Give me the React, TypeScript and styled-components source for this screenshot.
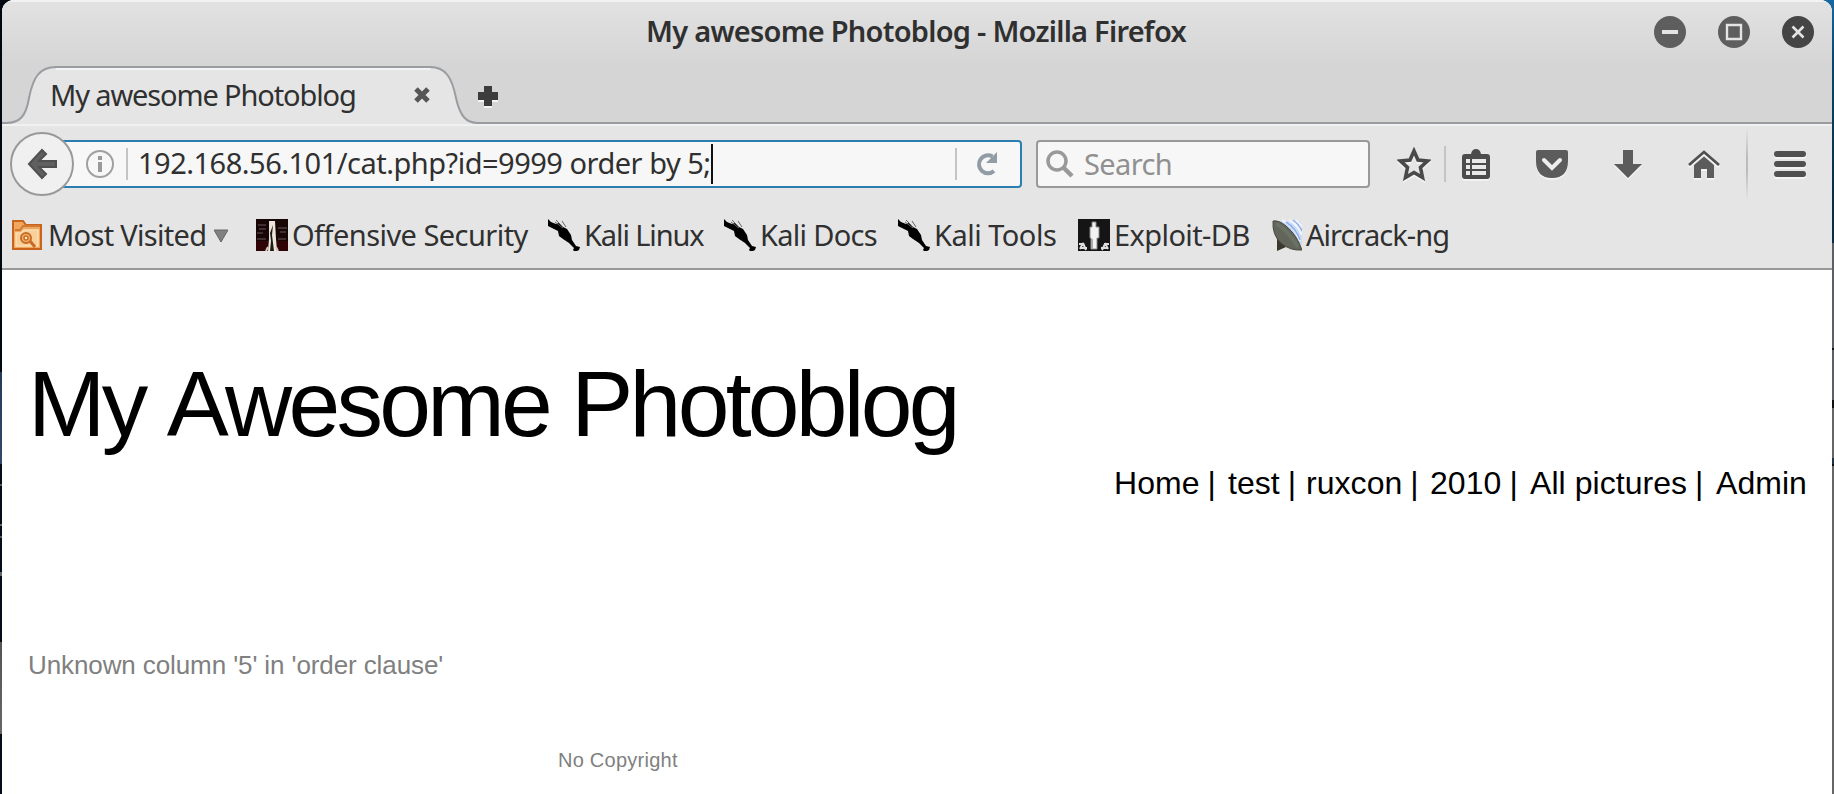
import React from 'react';
import styled, { createGlobalStyle } from 'styled-components';

const Global = createGlobalStyle`
  * { box-sizing: border-box; }
  html, body { margin: 0; padding: 0; background: #fff; overflow: hidden; }
`;

const Desktop = styled.div`
  width: 1834px;
  height: 794px;
  padding: 0 2px;
  overflow: hidden;
  background:
    linear-gradient(to bottom, #020810 0 372px, #263a58 372px, #33486a 464px, #020d1a 464px 484px, #555 484px 486px, #020d1a 486px 524px, #666 524px 526px, #020d1a 526px 536px, #555 536px 538px, #020d1a 538px 572px, #666 572px 576px, #020d1a 576px 642px, #555 642px, #666 734px, #020d1a 734px) left / 2px 100% no-repeat,
    linear-gradient(to bottom, #1668a0 0, #0e4468 60px, #072c44 200px 243px, #5c6064 243px 348px, #111 348px 350px, #5c6064 350px 400px, #111 400px 408px, #666 408px 458px, #234 458px 464px, #111 464px 466px, #666 466px) right / 60px 100% no-repeat, #020810;
`;

const Window = styled.div`
  height: 794px;
  border-radius: 12px 12px 0 0;
  overflow: hidden;
  background: #fff;
  font-family: 'Noto Sans', 'Open Sans', sans-serif;
  color: #303030;
`;

const Chrome = styled.header`
  height: 270px;
  background: #e5e5e5;
  border-bottom: 2px solid #999;
`;

const Top = styled.div`
  height: 124px;
  background: linear-gradient(#e2e2e2 0, #d5d5d5 66px, #d5d5d5);
  box-shadow: inset 0 2px #f2f2f2;
`;

const TitleBar = styled.div`
  height: 66px;
  display: grid;
  grid-template-columns: 1fr auto 1fr;
  padding: 0 18px 2px 0;
  align-items: center;
`;

const Title = styled.h1<{ $spacing: number }>`
  grid-column: 2;
  margin: 0 0 2px 16px;
  font-size: 29px;
  line-height: 38px;
  font-weight: 600;
  letter-spacing: ${p => p.$spacing}px;
  white-space: nowrap;
`;

const Controls = styled.div`
  display: flex;
  justify-content: flex-end;
  gap: 32px;
`;

const TabStrip = styled.div`
  height: 58px;
  display: flex;
  position: relative;
`;

const TabShape = styled.svg`
  position: absolute;
  left: 0;
  top: 0;
`;

const TabContent = styled.div`
  position: relative;
  width: 466px;
  padding: 0 38px 0 48px;
  display: flex;
  justify-content: space-between;
  align-items: center;
  height: 58px;
`;

const Label = styled.span<{ $spacing?: number }>`
  font-size: 29px;
  line-height: 38px;
  letter-spacing: ${p => p.$spacing ?? 0}px;
  white-space: nowrap;
`;

const NewTab = styled.div`
  position: relative;
  height: 58px;
  padding: 20px 0 0 10px;
`;

const NavBar = styled.div`
  height: 80px;
  display: flex;
  align-items: center;
  padding-left: 8px;
  box-shadow: inset 0 2px #f1f1f1;
`;

const Back = styled.div`
  width: 64px;
  height: 64px;
  position: relative;
  z-index: 1;
  flex: none;
`;

const Field = styled.div<{ $focus?: boolean; $width: number }>`
  width: ${p => p.$width}px;
  height: 48px;
  flex: none;
  display: flex;
  align-items: center;
  border: 2px solid ${p => (p.$focus ? '#2a7fb0' : '#999')};
  border-radius: 4px;
  background: #f7f7f7;
`;

const UrlField = styled(Field)`
  margin-left: -16px;
  padding-left: 26px;
`;

const SearchField = styled(Field)`
  margin-left: 14px;
  padding-left: 8px;
  gap: 10px;
  color: #909090;
`;

const Rule = styled.i<{ $h: number }>`
  width: 2px;
  height: ${p => p.$h}px;
  flex: none;
  background: #c4c4c4;
`;

const InfoRule = styled(Rule)`
  margin-left: 12px;
`;

const UrlText = styled(Label)`
  margin: 0 0 2px 10px;
`;

const Caret = styled.i`
  width: 2px;
  height: 40px;
  background: #111;
`;

const Reload = styled.div`
  margin-left: auto;
  display: flex;
  align-items: center;
  gap: 18px;
  padding-right: 21px;
`;

const Tools = styled.div`
  display: flex;
  align-items: center;
  margin-left: 27px;
`;

const ToolIcon = styled.svg<{ $ml?: number }>`
  display: block;
  flex: none;
  margin-left: ${p => p.$ml ?? 0}px;
  filter: drop-shadow(0 2px 0 #f3f3f3);
`;

const StarRule = styled(Rule)`
  margin-left: 13px;
`;

const MenuRule = styled(Rule)`
  margin-left: 26px;
  background: linear-gradient(transparent, #bbb 40%, #bbb 60%, transparent);
`;

const Bookmarks = styled.nav`
  height: 64px;
  display: flex;
  padding-left: 10px;
`;

const Bookmark = styled.div<{ $w: number; $gap: number }>`
  width: ${p => p.$w}px;
  display: flex;
  align-items: center;
  gap: ${p => p.$gap}px;
  padding-bottom: 2px;
`;

const Icon = styled.svg`
  display: block;
  flex: none;
`;

const DropArrow = styled(Icon)`
  margin: 2px 0 0 2px;
`;

const Page = styled.main`
  padding: 82px 21px 0 26px;
  font-family: 'Liberation Sans', Arial, sans-serif;
  color: #000;
`;

const Heading = styled.h2`
  margin: 0;
  font-size: 93px;
  line-height: 104px;
  font-weight: 400;
  letter-spacing: -3.7px;
  font-kerning: none;
  white-space: nowrap;
`;

const Menu = styled.ul`
  margin: 8px 0 0;
  padding: 0;
  list-style: none;
  display: flex;
  justify-content: flex-end;
  font-size: 32px;
  line-height: 38px;
`;

const MenuItem = styled.li<{ $w: number }>`
  width: ${p => p.$w}px;
  display: flex;
  gap: 8px;
  white-space: nowrap;
`;

const MenuText = styled.span`
  letter-spacing: 0.05px;
`;

const Message = styled.p`
  margin: 148px 0 0;
  color: #808080;
  font-size: 26px;
  line-height: 30px;
  letter-spacing: -0.1px;
`;

const Footer = styled.footer`
  margin: 68px 0 0 530px;
  color: #808080;
  font-size: 20px;
  line-height: 24px;
  letter-spacing: 0.25px;
`;

const MinIcon = () => (
  <Icon width="32" height="32"><circle cx="16" cy="16" r="16" fill="#5e5e5e" /><path d="M8 16h16" stroke="#e4e4e4" strokeWidth="4" /></Icon>
);
const MaxIcon = () => (
  <Icon width="32" height="32"><circle cx="16" cy="16" r="16" fill="#5e5e5e" /><path d="M9 9h14v14H9z" fill="none" stroke="#e4e4e4" strokeWidth="2.4" /></Icon>
);
const CloseIcon = () => (
  <Icon width="32" height="32"><circle cx="16" cy="16" r="16" fill="#454545" /><path d="M10.500 10.500l11 11M21.500 10.500l-11 11" stroke="#e4e4e4" strokeWidth="2.600" /></Icon>
);

const Dragon = () => (
  <Icon width="32" height="32" viewBox="0 0 32 32">
    <path d="M0 0l3 3 5 2 3-1 4 4 4 2 4 6 1 5 4 6 4 1-1 3-4 2-2-2 1-2-5-5-6-4-4-3-1-5-4-2-6-3z" fill="#000" />
    <path d="M8 1l6 6M14 2l4 6M7 3l8 6" stroke="#666" strokeWidth="1" fill="none" />
  </Icon>
);

const FolderIcon = () => (
  <Icon width="30" height="30" viewBox="0 0 30 30">
    <path d="M1 1h10l3 4h15v24H1z" fill="#f0a860" stroke="#c8641c" strokeWidth="2" />
    <path d="M3 10h5l3-4h17" stroke="#d07a34" strokeWidth="2" fill="none" />
    <path d="M4 13h5l3-3h14v16H4z" fill="#f8d098" stroke="#fbe0b8" strokeWidth="1.500" />
    <circle cx="14" cy="18" r="5" fill="#f6b468" stroke="#c86a28" strokeWidth="2" />
    <circle cx="14" cy="18" r="2" fill="#fff0c8" stroke="#c86a28" strokeWidth="1.500" />
    <path d="M18 21l5 6" stroke="#c86a28" strokeWidth="3" />
  </Icon>
);

const OffsecIcon = () => (
  <Icon width="32" height="32" viewBox="0 0 32 32">
    <path d="M0 0h32v32H0z" fill="#180506" />
    <path d="M0 22h32v10H0z" fill="#300406" />
    <path d="M2 6h8M3 10h7M1 14h6M22 9h9M24 13h6M1 20h9M22 20h8" stroke="#3e3030" strokeWidth="2" />
    <path d="M13 2h6l1 18 1 12h-9l1-12z" fill="#ece6da" />
    <path d="M17 6l-1 10 2 16h-4l1-10-1-8z" fill="#1c1c1c" />
    <path d="M10 32l2-4M22 32l-2-4" stroke="#d8c8b8" strokeWidth="2" />
  </Icon>
);

const ExploitIcon = () => (
  <Icon width="32" height="32" viewBox="0 0 32 32">
    <path d="M0 0h32v32H0z" fill="#151515" />
    <path d="M2 30l3-6M8 31l-3-7M30 30l-3-6M24 31l3-6M1 25h5M26 25h5M2 29h7M23 29h7" stroke="#ddd" strokeWidth="2" />
    <path d="M12 8h2V3h4v5h3v11h-2v11h-6V19h-1z" fill="#f2f2f2" stroke="#888" strokeWidth="1" />
    <path d="M14 20v10" stroke="#aaa" strokeWidth="2" />
  </Icon>
);

const DishIcon = () => (
  <Icon width="30" height="32" viewBox="0 0 30 32">
    <path d="M8 2h20q2 2 2 24z" fill="#c8d8f8" />
    <path d="M10 1q13 5 18 21M17 1q9 5 13 15M24 1l6 7" stroke="#f0f4ff" strokeWidth="2.500" fill="none" />
    <path d="M14 3q10 6 14 18M21 1q6 4 9 11" stroke="#8eaee8" strokeWidth="1.500" fill="none" />
    <path d="M5 18v14l9-4z" fill="#3c382c" />
    <path d="M1 2q6-1 13 5 11 9 16 24-12 1-21-7Q0 16 1 2z" fill="#62665a" stroke="#464a40" />
    <path d="M4 5q10 4 22 23" stroke="#6c7166" strokeWidth="4" fill="none" />
  </Icon>
);

export default function App() {
  return (
    <Desktop>
      <Global />
      <Window>
        <Chrome>
          <Top>
            <TitleBar>
              <Title $spacing={-0.75}>My awesome Photoblog - Mozilla Firefox</Title>
              <Controls><MinIcon /><MaxIcon /><CloseIcon /></Controls>
            </TitleBar>
            <TabStrip>
              <TabShape width="1830" height="58" viewBox="0 0 1830 58">
                <path d="M0 57H4C18 57 24 50 27 32C31 12 37 1 54 1H428C444 1 450 12 454 32C458 50 464 57 476 57V58H0z" fill="#e5e5e5" />
                <path d="M0 57H4C18 57 24 50 27 32C31 12 37 1 54 1H428C444 1 450 12 454 32C458 50 464 57 476 57H1830" fill="none" stroke="#999da1" strokeWidth="2" />
                <path d="M54 3H428" stroke="#f4f4f4" strokeWidth="2" />
              </TabShape>
              <TabContent>
                <Label $spacing={-1.13}>My awesome Photoblog</Label>
                <Icon width="16" height="16" viewBox="0 0 16 16"><path d="M2 2l12 12M14 2L2 14" stroke="#555" strokeWidth="5" /></Icon>
              </TabContent>
              <NewTab>
                <ToolIcon width="20" height="20" viewBox="0 0 20 20"><path d="M6 0h8v6h6v8h-6v6H6v-6H0V6h6z" fill="#3c3c3c" /></ToolIcon>
              </NewTab>
            </TabStrip>
          </Top>
          <NavBar>
            <Back>
              <Icon width="64" height="64" viewBox="0 0 64 64">
                <circle cx="32" cy="32" r="31" fill="#f0f0f0" stroke="#999" strokeWidth="2" />
                <path d="M19 32l13-14 4 4-7 7h17v6H29l7 7-4 4z" fill="#606060" stroke="#505050" strokeWidth="2" />
              </Icon>
            </Back>
            <UrlField $focus $width={964}>
              <Icon width="28" height="28" viewBox="0 0 28 28">
                <circle cx="14" cy="14" r="13" fill="none" stroke="#a0a0a0" strokeWidth="2" />
                <path d="M14 6v4M14 12v10" stroke="#999" strokeWidth="4" />
              </Icon>
              <InfoRule $h={32} />
              <UrlText $spacing={-0.5}>192.168.56.101/cat.php?id=9999 order by 5;</UrlText>
              <Caret />
              <Reload>
                <Rule $h={32} />
                <Icon width="24" height="24" viewBox="0 0 24 24">
                  <path d="M17.500 4.500A9 9 0 1 0 19 19" fill="none" stroke="#929ca6" strokeWidth="4" />
                  <path d="M22 0v11H11z" fill="#929ca6" />
                </Icon>
              </Reload>
            </UrlField>
            <SearchField $width={334}>
              <Icon width="28" height="28" viewBox="0 0 28 28">
                <circle cx="11" cy="11" r="9" fill="none" stroke="#999" strokeWidth="3.500" />
                <path d="M17 17l9 9" stroke="#999" strokeWidth="4.500" />
              </Icon>
              <Label $spacing={-0.6}>Search</Label>
            </SearchField>
            <Tools>
              <ToolIcon width="34" height="34" viewBox="0 0 34 34"><path d="M17 4l4 9 9.500 1-7 6.500 2 10-8.500-5-8.500 5 2-10-7-6.500 9.500-1z" fill="none" stroke="#4a4a4a" strokeWidth="3.600" /></ToolIcon>
              <StarRule $h={36} />
              <ToolIcon $ml={16} width="28" height="30" viewBox="0 0 28 30">
                <path d="M3 5h6q1-5 5-5t5 5h6q3 0 3 3v19q0 3-3 3H3q-3 0-3-3V8q0-3 3-3z" fill="#4c4c4c" />
                <path d="M4 10h4v4H4zM10 10h14v4H10zM4 16h4v4H4zM10 16h14v4H10zM4 22h4v4H4zM10 22h14v4H10z" fill="#e9e9e9" />
              </ToolIcon>
              <ToolIcon $ml={46} width="32" height="28" viewBox="0 0 32 28">
                <path d="M2 0h28q2 0 2 2v9q0 17-16 17T0 11V2q0-2 2-2z" fill="#5c5c5c" />
                <path d="M8 10l8 8 8-8" fill="none" stroke="#eee" strokeWidth="4" strokeLinecap="round" />
              </ToolIcon>
              <ToolIcon $ml={46} width="28" height="28" viewBox="0 0 28 28"><path d="M9 0h10v14h9L14 28 0 14h9z" fill="#5c5c5c" /></ToolIcon>
              <ToolIcon $ml={46} width="32" height="28" viewBox="0 0 32 28">
                <path d="M1 15L16 2l15 13" fill="none" stroke="#505050" strokeWidth="2.800" />
                <path d="M6 15L16 6.500 26 15v13h-7v-9h-6v9H6z" fill="#5c5c5c" />
              </ToolIcon>
              <MenuRule $h={72} />
              <ToolIcon $ml={26} width="32" height="26" viewBox="0 0 32 26"><path d="M3 3h26M3 13h26M3 23h26" stroke="#505050" strokeWidth="6" strokeLinecap="round" /></ToolIcon>
            </Tools>
          </NavBar>
          <Bookmarks>
            <Bookmark $w={244} $gap={6}>
              <FolderIcon />
              <Label $spacing={-0.7}>Most Visited</Label>
              <DropArrow width="14" height="14" viewBox="0 0 14 14"><path d="M0 1h14L7 13z" fill="#808080" stroke="#666" /></DropArrow>
            </Bookmark>
            <Bookmark $w={292} $gap={4}><OffsecIcon /><Label $spacing={-0.55}>Offensive Security</Label></Bookmark>
            <Bookmark $w={176} $gap={4}><Dragon /><Label $spacing={-1.1}>Kali Linux</Label></Bookmark>
            <Bookmark $w={174} $gap={4}><Dragon /><Label $spacing={-0.7}>Kali Docs</Label></Bookmark>
            <Bookmark $w={180} $gap={4}><Dragon /><Label $spacing={-0.5}>Kali Tools</Label></Bookmark>
            <Bookmark $w={194} $gap={4}><ExploitIcon /><Label $spacing={-0.6}>Exploit-DB</Label></Bookmark>
            <Bookmark $w={200} $gap={4}><DishIcon /><Label $spacing={-0.95}>Aircrack-ng</Label></Bookmark>
          </Bookmarks>
        </Chrome>
        <Page>
          <Heading>My Awesome Photoblog</Heading>
          <Menu>
            <MenuItem $w={114}><MenuText>Home</MenuText>|</MenuItem>
            <MenuItem $w={78}><MenuText>test</MenuText>|</MenuItem>
            <MenuItem $w={124}><MenuText>ruxcon</MenuText>|</MenuItem>
            <MenuItem $w={100}><MenuText>2010</MenuText>|</MenuItem>
            <MenuItem $w={186}><MenuText>All pictures</MenuText>|</MenuItem>
            <MenuItem $w={95}><MenuText>Admin</MenuText></MenuItem>
          </Menu>
          <Message>Unknown column '5' in 'order clause'</Message>
          <Footer>No Copyright</Footer>
        </Page>
      </Window>
    </Desktop>
  );
}
